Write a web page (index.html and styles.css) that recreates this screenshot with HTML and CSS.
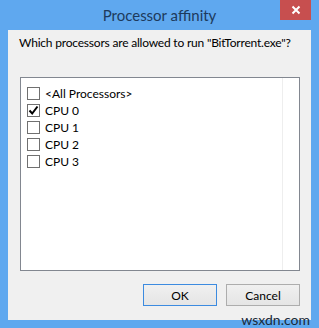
FILE: index.html
```html
<!DOCTYPE html>
<html>
<head>
  <title>Processor affinity</title>
  <meta charset="UTF-8">
  <link rel="stylesheet" href="styles.css">
</head>
<body>
  <div class="window">
    <div class="titlebar">
      <span class="title">Processor affinity</span>
      <div class="close">
        <svg width="10" height="10" viewBox="0 0 10 10"><path d="M1.5 1.5 L8.5 8.5 M8.5 1.5 L1.5 8.5" stroke="#fff" stroke-width="2"/></svg>
      </div>
    </div>
    <div class="client">
      <p class="prompt">Which processors are allowed to run "BitTorrent.exe"?</p>
      <div class="list">
        <div class="item"><span class="box"></span>&lt;All Processors&gt;</div>
        <div class="item"><span class="box checked"><svg width="11" height="11" viewBox="0 0 11 11"><path d="M1.5 5.5 L4.2 8.5 L9.5 1.5" fill="none" stroke="#000" stroke-width="2"/></svg></span>CPU 0</div>
        <div class="item"><span class="box"></span>CPU 1</div>
        <div class="item"><span class="box"></span>CPU 2</div>
        <div class="item"><span class="box"></span>CPU 3</div>
      </div>
      <div class="buttons">
        <button class="btn default">OK</button>
        <button class="btn">Cancel</button>
      </div>
    </div>
    <div class="watermark">wsxdn.com</div>
  </div>
</body>
</html>
```

FILE: styles.css
```css
body{
  margin:0;
  font-family:"Lato", "Noto Sans", sans-serif;
  background:#fff;
}
.window{
  position:relative;
  width:319px;
  height:328px;
  background:#5fa8ef;
  display:flex;
  flex-direction:column;
  box-sizing:border-box;
}
.titlebar{
  height:30px;
  display:flex;
  align-items:center;
  justify-content:center;
  position:relative;
}
.title{
  font-size:15px;
  color:#1d3a5c;
  margin-top:-1px;
}
.close{
  position:absolute;
  top:0;
  right:8px;
  width:31px;
  height:20px;
  background:#c74f4f;
  display:flex;
  align-items:center;
  justify-content:center;
}
.client{
  flex:1;
  margin:0 8px 8px 8px;
  background:#f0f0f0;
  padding:0 11px 0 11px;
  display:flex;
  flex-direction:column;
}
.prompt{
  margin:5px 0 0 0;
  font-size:12px;
  line-height:15px;
  letter-spacing:-0.2px;
  white-space:nowrap;
  color:#000;
}
.list{
  margin-top:27px;
  margin-left:1px;
  height:194px;
  box-sizing:border-box;
  border:1px solid #828790;
  background:#fff;
  padding:7px 0 0 6px;
  background-image:linear-gradient(#eeeeee,#eeeeee);
  background-size:1px 100%;
  background-position:261px 0;
  background-repeat:no-repeat;
}
.item{
  height:17px;
  display:flex;
  align-items:center;
  font-size:12px;
  color:#000;
}
.box{
  width:11px;
  height:11px;
  border:1px solid #707070;
  background:#fff;
  margin-right:5px;
  display:flex;
  align-items:center;
  justify-content:center;
}
.buttons{
  display:flex;
  justify-content:flex-end;
  gap:9px;
  margin-top:13px;
}
.btn{
  width:74px;
  height:22px;
  font-family:inherit;
  font-size:12px;
  color:#000;
  border:1px solid #adadad;
  background:linear-gradient(#f0f0f0,#e5e5e5);
  padding:0;
}
.btn.default{
  border-color:#3c8be0;
}
.watermark{
  position:absolute;
  right:9px;
  bottom:1px;
  font-size:14px;
  color:#1a2a3a;
  line-height:14px;
}
```
